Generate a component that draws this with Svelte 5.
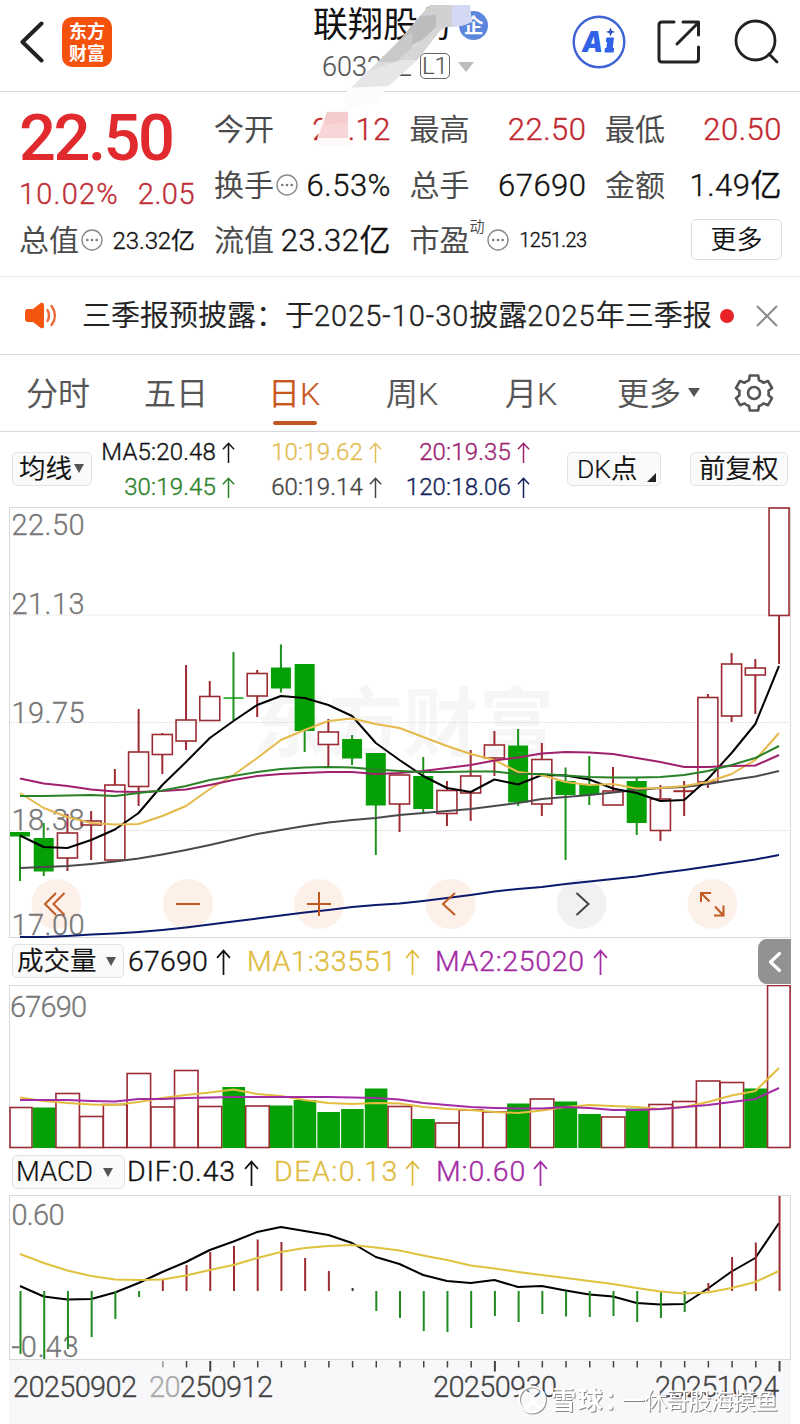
<script>
  const X0 = 20, STEP = 23.72;
  const cx = (i) => X0 + STEP * i;
  const line = (ys) => ys.map((y, i) => `${cx(i).toFixed(1)},${y}`).join(' ');

  // [up, bodyTop, bodyBottom, wickTop, wickBottom]
  const candles = [
    [0,832,836.5,832,881],[0,838,871.5,823,876],[1,833,858,814,871],[1,821,825,811,860],[1,785,860,769,860],
    [1,752,786.5,709,806],[1,734.5,754.5,733,774],[1,720,741,665,750],[1,696.5,720.5,681,721],[0,697.3,698.8,652,720],
    [1,673.5,696,670,717],[0,667.5,688.5,644.5,692.5],[0,664,731,664,752],[1,732,744.5,719,766],[0,739,758.5,735,765],
    [0,753,805.5,753,855],[1,775,804,775,832],[0,776,809,757,812],[1,790.5,813.5,781,826],[1,776,793,750,821],
    [1,745,758,731,776],[0,745.5,802.5,729,806],[1,759.5,804,743,816],[0,781,795,767.5,860],[0,784,795,756,805],
    [1,791,805,767,805],[0,781,823,777,835],[1,799,830.5,785,841],[1,791,791.4,781,816],[1,697.5,782,694,788],
    [1,664,716,653,722],[1,668,675,659,714],[1,508,615.5,508,664]
  ];
  const averages = [
    ['#4a4a4c', [868,867,866,864,861.5,858.5,854.5,850,845,839.5,834,830,826,822.5,820,818,815,813,811,809,806,803,799,797,795,792.5,790,788,787,784,780,776.5,771]],
    ['#0b1a6c', [937,937,936,934.5,933.5,932,930,927.5,924.5,921.5,918.5,915.5,912.5,910,907,905,903.5,901,898,895,891.5,889,887,884,881.5,879,876.5,873,870,866.5,863,859.5,855]],
    ['#000', [835.5,847,848,840,829.5,813,785,762,738,721,705,696,698,705,716,743,760,776,788,792,779.5,784.5,775,775.5,779.5,788.5,793,801,800,779,753,724,666]],
    ['#e6b94c', [793,808,817,823,824.5,824,816,806,789,775,758,740,730,721,718.5,724,728,737,746,754,760,772,775,782,785,784,788.5,788,786,782,774,760,733]],
    ['#a0206e', [778.5,783.5,786,789.5,791.5,792,791,789.5,785,780,776,774,773,772,772,774,773,771,768,765,760.5,757.5,753.5,752,752.5,754,758,762,767,767,766,765.5,755]],
    ['#2a8228', [796,796,795.5,795,796,793,790.5,786,780,776,772,769,767.5,767,767.5,769.5,771,772,772,771.5,771.5,774,774,775.5,777,777.5,777.5,777,775,771,765,758,746]]
  ];
  const volumes = [
    [1,1107.5],[0,1107.5],[1,1093.5],[1,1116.5],[1,1104.5],[1,1073.5],[1,1107],[1,1070.5],[1,1106.5],[0,1087],[1,1106],
    [0,1105.5],[0,1100],[0,1112],[0,1109],[0,1088.5],[1,1106.5],[0,1119],[1,1123],[1,1110],[1,1112],[0,1103.5],[1,1099],
    [0,1101.5],[0,1114],[1,1117],[0,1108.5],[1,1104.5],[1,1101.5],[1,1081],[1,1082.5],[0,1088.5],[1,985.5]
  ];
  const volYellow = [1097.5,1101,1103,1104.5,1105,1102,1098,1095,1092.5,1089.5,1094,1096,1100,1103,1104,1103,1103.5,1107,1109,1110,1112,1113,1110.5,1107,1105,1106,1107,1109,1107,1102,1095.5,1091,1068];
  const volPurple = [1100,1100,1100,1101,1101.5,1099,1099,1098,1097.5,1097,1097,1097,1097,1097,1097.5,1098,1099.5,1103,1105,1107,1108,1108.5,1108.5,1107,1108,1110,1110,1109,1107,1105,1102,1099,1088];
  const macd = [1354,1359,1349,1337,1319,1297,1279,1265,1252,1246,1239.5,1242,1258,1271,1288,1311,1318,1331,1332,1328,1316,1322,1314,1316.5,1317,1316,1322,1318,1312,1283,1257,1242.5,1196];
  const dif = [1286,1296.5,1299.5,1299,1292.5,1283,1272,1262,1250,1241.5,1232,1227,1231,1235,1243,1257,1264,1275,1281,1283,1280,1287,1286,1290.5,1294.5,1296.5,1303,1304.5,1304,1288.5,1271.5,1258,1223];
  const dea = [1254,1263,1270.5,1276,1279.5,1280,1279.5,1275.5,1270,1265,1258,1252,1248,1246,1245,1247.5,1250.5,1255.5,1260,1265.5,1268.5,1272,1275,1278,1281,1284,1288,1291.5,1293.5,1292.5,1288,1282,1271];
  const ticks = Array.from({ length: 27 }, (_, k) => k + 6);

  const priceLabels = [['22.50', 535], ['21.13', 614], ['19.75', 722.5], ['18.38', 830], ['17.00', 935]];
  const tools = [56.5, 188, 319, 450.5, 581.5, 712.5];
  const RED = '#9c2b34', GREEN = '#05a005';
</script>

{#snippet up(w, h)}
  <svg class="up" width={w} height={h} viewBox="0 0 14 24" preserveAspectRatio="none"><path d="M7 24V1.5M1 8.2L7 1.5L13 8.2" fill="none" stroke="currentColor" stroke-width="1.6" /></svg>
{/snippet}

{#snippet dots()}
  <svg class="dots" width="22" height="22" viewBox="0 0 22 22"><circle cx="11" cy="11" r="10" fill="none" stroke="#8a8a8a" stroke-width="1.4" /><g fill="#777"><circle cx="6.3" cy="11" r="1.3" /><circle cx="11" cy="11" r="1.3" /><circle cx="15.7" cy="11" r="1.3" /></g></svg>
{/snippet}

<main>
  <header>
    <svg class="back" width="24" height="42" viewBox="0 0 24 42"><path d="M21.5 2.5L2.5 21L21.5 39.5" fill="none" stroke="#222" stroke-width="4" stroke-linecap="round" stroke-linejoin="round" /></svg>
    <div class="logo"><span>东方</span><span>财富</span></div>
    <div class="title">
      <div class="name">联翔股份<span class="qi">企</span></div>
      <div class="code"><span>603272</span><span class="l1">L1</span><i></i></div>
      <svg class="mask" width="185" height="120" viewBox="310 0 185 120">
        <polygon points="430,5 470,5 472,22 448,26 440,30 417,60 386,88 351,88 398,42 420,16" fill="#dcdcde" />
        <polygon points="430,5 452,5 452,27 420,27 420,16" fill="#d0d0d2" />
        <polygon points="452,5 469,5 472,22 462,26 452,27" fill="#d3d8f3" />
        <polygon points="420,16 436,15 436,33 412,45 398,45 398,42" fill="#bcbcbe" />
        <polygon points="398,42 412,32 412,52 396,62 378,62" fill="#c9c9cb" />
        <polygon points="436,27 448,26 440,31 417,60 400,66 400,58 420,42" fill="#d6d6d8" />
        <polygon points="367,72 400,60 417,60 404,72 386,88 351,88" fill="#e6e6e8" />
        <polygon points="347,88 388,86 378,102 344,110" fill="#fcfcfc" />
      </svg>
    </div>
    <svg class="ai" width="54" height="54" viewBox="0 0 54 54">
      <circle cx="27" cy="27" r="25.3" fill="#fff" stroke="#3d63d6" stroke-width="2.4" />
      <text x="10" y="37" font-family="Inter" font-size="29" font-weight="900" font-style="italic" fill="#2f62e6" textLength="21" lengthAdjust="spacingAndGlyphs">A</text>
      <path d="M34.5 22.500h7.500l-1.200 10.500h1.400l-.6 4.500H32.500l.5-4.500h1.400l.7-6h-1.400z" fill="#2f62e6" />
      <path d="M38.500 12.500l1.300 3.200l3.300 1.200l-3.300 1.200l-1.300 3.300l-1.300-3.300l-3.300-1.200l3.300-1.200z" fill="#2b4fc0" />
    </svg>
    <svg class="share" width="46" height="46" viewBox="0 0 46 46" fill="none" stroke="#222" stroke-width="3" stroke-linecap="round" stroke-linejoin="round"><path d="M18 3H6Q3 3 3 6V40Q3 43 6 43H39Q42.500 43 42.500 40V28M27 3H42.500V16M42 4L21 25" /></svg>
    <svg class="search" width="46" height="46" viewBox="0 0 46 46" fill="none" stroke="#222" stroke-width="2.800" stroke-linecap="round"><circle cx="21.500" cy="21.500" r="19.500" /><path d="M35 35L43 43" /></svg>
  </header>

  <section class="quote">
    <div class="first">
      <div class="price">22.50</div>
      <div class="chg"><span>10.02%</span><span>2.05</span></div>
      <div class="cap"><label>总值</label>{@render dots()}<b>23.32亿</b></div>
    </div>
    <div class="cells">
      <div class="cell"><label>今开</label><b class="red">20.12</b>
        <svg class="pink" width="36" height="38" viewBox="0 0 36 38"><polygon points="10,0 34,0 34,37 1,37 4,22" fill="#fefafa" /><polygon points="12,3 33,3 33,29 3,29" fill="#f8d5d6" /><polygon points="12,3 33,3 33,13 9,16" fill="#f5cccd" /></svg>
      </div>
      <div class="cell"><label>最高</label><b class="red">22.50</b></div>
      <div class="cell"><label>最低</label><b class="red">20.50</b></div>
      <div class="cell"><label>换手</label>{@render dots()}<b>6.53%</b></div>
      <div class="cell"><label>总手</label><b>67690</b></div>
      <div class="cell"><label>金额</label><b>1.49亿</b></div>
      <div class="cell"><label>流值</label><b>23.32亿</b></div>
      <div class="cell"><label>市盈</label><sup>动</sup>{@render dots()}<b class="small">1251.23</b></div>
      <div class="cell"><button>更多</button></div>
    </div>
  </section>

  <section class="notice">
    <svg width="36" height="28" viewBox="0 0 36 28"><path d="M4 7H9L17 .8Q20 0 20 3V24Q20 27 17 26.200L9 20H4Q1 20 1 17V10Q1 7 4 7Z" fill="#f4550f" /><path d="M23.500 8Q26.500 13.500 23.500 19M27.500 4Q34.500 13.500 27.500 23" fill="none" stroke="#ee6a35" stroke-width="2.400" stroke-linecap="round" /></svg>
    <p>三季报预披露：于<span>2025-10-30</span>披露<span>2025</span>年三季报</p>
    <i></i>
    <svg width="24" height="24" viewBox="0 0 24 24"><path d="M2 2L22 22M22 2L2 22" stroke="#8c8c8c" stroke-width="2" /></svg>
  </section>

  <nav>
    <span>分时</span><span>五日</span><span class="on">日K</span><span>周K</span><span>月K</span><span class="more">更多<i></i></span>
    <svg width="40" height="40" viewBox="0 0 40 40" fill="none" stroke="#555" stroke-width="2.600" stroke-linejoin="round"><path d="M15.800 2.500H24.200L25 7.200Q27.500 8 29.500 9.800L34 8L38 15L34.400 18Q35 20 34.400 22L38 25.200L34 32.200L29.500 30.400Q27.500 32.200 25 33L24.200 37.500H15.800L15 33Q12.500 32.200 10.500 30.400L6 32.200L2 25.200L5.600 22Q5 20 5.600 18L2 15L6 8L10.500 9.800Q12.500 8 15 7.200Z" /><circle cx="20" cy="20" r="6" /></svg>
  </nav>

  <section class="ma">
    <span class="pill avg">均线<i></i></span>
    <div class="vals">
      <span>MA5:20.48{@render up(13, 21)}</span>
      <span style:color="#e3bd55">10:19.62{@render up(13, 21)}</span>
      <span style:color="#9c1f70">20:19.35{@render up(13, 21)}</span>
      <span style:color="#2a8228">30:19.45{@render up(13, 21)}</span>
      <span style:color="#444">60:19.14{@render up(13, 21)}</span>
      <span style:color="#141f5c">120:18.06{@render up(13, 21)}</span>
    </div>
    <span class="pill dk">DK点<svg width="9" height="9"><path d="M9 0V9H0Z" fill="#222" /></svg></span>
    <span class="pill fq">前复权</span>
  </section>

  <svg class="chart" width="800" height="431" viewBox="0 507 800 431">
    <text x="252" y="750" class="wm" textLength="302">东方财富</text>
    <path d="M9.500 938V507.500H790.500V938M9 937.500H791" fill="none" stroke="#d9d9d9" />
    <path d="M10 615H790M10 722.500H790M10 830.500H790" stroke="#e2e2e2" stroke-dasharray="2 1" />
    {#each tools as x, i}
      <circle cx={x} cy="904" r="25" fill={i === 4 ? '#f1f1f3' : '#fdf0e9'} />
    {/each}
    {#each priceLabels as [t, y]}
      <text x="11.500" {y} class="axis" textLength="73">{t}</text>
    {/each}
    {#each candles as [rise, t, b, hi, lo], i}
      {#if rise}
        <path d="M{cx(i)} {hi}V{t}M{cx(i)} {b}V{lo}" stroke={RED} stroke-width="2" />
        <rect x={cx(i) - 10} y={t} width="20" height={b - t} fill="none" stroke={RED} stroke-width="1.600" />
      {:else}
        <path d="M{cx(i)} {hi}V{lo}" stroke="#1c911c" stroke-width="2" />
        <rect x={cx(i) - 10} y={t} width="20" height={b - t} fill={GREEN} />
      {/if}
    {/each}
    {#each averages as [c, ys]}
      <polyline points={line(ys)} fill="none" stroke={c} stroke-width="2" stroke-linejoin="round" />
    {/each}
    <g fill="none" stroke="#c05a20" stroke-width="2">
      <path d="M56 893L45 904L56 915M64.500 893L53.500 904L64.500 915" />
      <path d="M176 904H200M307 904H331M319 892V916" />
      <path d="M455 893L443 904L455 915" />
      <path d="M576.500 893L588.500 904L576.500 915" stroke="#444" />
      <path d="M701 902V893H711M701.500 893.500L709.500 901.500M723.500 905.500V915.500H714M723 915L715 906.500" />
    </g>
  </svg>

  <section class="ind">
    <span class="pill vol">成交量<i></i></span>
    <span class="a">67690{@render up(15, 26)}</span>
    <span class="b">MA1:33551{@render up(15, 26)}</span>
    <span class="c">MA2:25020{@render up(15, 26)}</span>
    <span class="drawer"><svg width="14" height="22" viewBox="0 0 14 22"><path d="M11.500 2.500L2.500 11L11.500 19.500" fill="none" stroke="#fff" stroke-width="3.200" stroke-linecap="round" stroke-linejoin="round" /></svg></span>
  </section>

  <svg class="chart" width="800" height="164" viewBox="0 985 800 164">
    <path d="M9.500 1148V985.500H790.500V1148" fill="none" stroke="#d9d9d9" />
    <text x="10" y="1016.500" class="axis" textLength="77">67690</text>
    {#each volumes as [rise, t], i}
      {#if rise}
        <rect x={cx(i) - (i ? 11.5 : 10)} y={t} width={i === 32 ? 22.5 : i ? 23.5 : 22} height={1147.5 - t} fill="none" stroke={RED} stroke-width="1.600" />
      {:else}
        <rect x={cx(i) - 11} y={t} width="22.6" height={1148 - t} fill={GREEN} />
      {/if}
    {/each}
    <polyline points={line(volYellow)} fill="none" stroke="#e3bd3e" stroke-width="2" />
    <polyline points={line(volPurple)} fill="none" stroke="#a32ba5" stroke-width="2" />
  </svg>

  <section class="ind low">
    <span class="pill mac">MACD<i></i></span>
    <span class="a d">DIF:0.43{@render up(15, 26)}</span>
    <span class="b e">DEA:0.13{@render up(15, 26)}</span>
    <span class="c m">M:0.60{@render up(15, 26)}</span>
  </section>

  <svg class="chart" width="800" height="229" viewBox="0 1195 800 229">
    <rect x="9" y="1360" width="782" height="64" fill="#f8f8fa" />
    <rect x="9.500" y="1195.500" width="781" height="164" fill="none" stroke="#d9d9d9" />
    <text x="11.500" y="1225" class="axis" textLength="53">0.60</text>
    <text x="11.500" y="1356.500" class="axis" textLength="67">-0.43</text>
    <polyline points={line(dif)} fill="none" stroke="#000" stroke-width="2" stroke-linejoin="round" />
    {#each macd as y, i}
      <path d="M{cx(i) + 0.5} 1291V{y}" stroke={i === 14 ? '#333' : y < 1291 ? '#9c2b34' : '#1f8a1f'} stroke-width="2" />
    {/each}
    <polyline points={line(dea)} fill="none" stroke="#dfc23e" stroke-width="2" />
    {#each ticks as i}
      <path d="M{cx(i) + 0.5} 1361V{i % 12 === 8 ? 1371.5 : 1367.5}" stroke={i === 6 ? '#999' : '#444'} stroke-width={i % 12 === 8 ? 2 : 1.5} />
    {/each}
    <g class="date">
      <text x="13" y="1396.500" textLength="124">20250902</text>
      <text x="149" y="1396.500" textLength="124"><tspan class="faded">20</tspan>250912</text>
      <text x="433" y="1396.500" textLength="124">20250930</text>
      <text x="655" y="1396.500" textLength="124">20251024</text>
    </g>
    <g class="brand">
      <g fill="none" stroke-width="2"><g stroke="#999"><circle cx="533" cy="1400.500" r="13" /></g><g stroke="#fff"><circle cx="532" cy="1399.500" r="13" /><path d="M525 1392Q531 1394 533 1400T540 1408M539 1391Q531 1396 531 1401T525 1408" stroke-width="2.500" /></g></g>
      <text x="551" y="1409" class="name1" textLength="78">雪球：</text>
      <text x="622" y="1409" textLength="156">一休哥股海摸鱼</text>
    </g>
  </svg>
</main>

<style>
  :global(body) { margin: 0; background: #fff; }
  main { width: 800px; height: 1424px; overflow: hidden; background: #fff; color: #111; font-family: Roboto, 'Noto Sans CJK SC', sans-serif; font-weight: 350; white-space: nowrap; }
  header, section, nav { box-sizing: border-box; display: flex; }
  svg { display: block; flex: none; }
  b { font-weight: inherit; }
  b, .chg, .notice p span, .vals, .ind { -webkit-text-stroke: .35px currentColor; }
  label, .notice p, nav, .pill, .code { -webkit-text-stroke: .2px currentColor; }

  header { height: 92px; border-bottom: 1px solid #d6d6d6; position: relative; }
  .back { margin: 21px 0 0 20px; }
  .logo { margin: 17px 0 0 18px; width: 50px; height: 50px; box-sizing: border-box; padding-top: 2px; border-radius: 10px; background: #f4510d; color: #fff; display: flex; flex-direction: column; align-items: center; font: 700 18px/22px 'Noto Sans CJK SC', sans-serif; }
  .title { position: relative; width: 200px; margin-left: 201px; }
  .name { display: flex; height: 50px; font-size: 35px; line-height: 51px; font-weight: 400; }
  .qi { width: 29px; height: 29px; margin: 11px 0 0 6px; border-radius: 50%; background: #5c86dc; color: #fff; font: 700 20px/28px 'Noto Sans CJK SC', sans-serif; text-align: center; }
  .code { display: flex; height: 34px; padding-left: 9px; font-size: 27px; line-height: 35px; color: #555; }
  .l1 { width: 28px; height: 24px; margin: 3px 0 0 8px; border: 1.300px solid #666; border-radius: 5px; font-size: 24px; line-height: 25px; text-align: center; }
  .code i { margin: 12px 0 0 8px; border: 8px solid transparent; border-top: 10px solid #bcbcbc; border-bottom: 0; height: 0; }
  .mask { position: absolute; left: -3px; top: 0; }
  .ai { margin: 15px 0 0 59px; }
  .share { margin: 19px 0 0 30px; }
  .search { margin: 19px 0 0 32px; }

  .quote { height: 185px; border-bottom: 1px solid #e6e6e6; }
  .first { width: 176px; margin-left: 19px; }
  .price { margin-top: 14px; height: 64px; font-size: 65px; line-height: 65px; font-weight: 480; letter-spacing: -2.500px; color: #e02a2e; }
  .chg { display: flex; justify-content: space-between; height: 46px; font-size: 29px; line-height: 48px; color: #bf2e35; letter-spacing: 1.200px; }
  .chg span + span { letter-spacing: .5px; }
  .cap { display: flex; height: 50px; line-height: 50px; }
  label { font-size: 30px; color: #4a4a4a; }
  .dots { margin: 13px 0 0 2px; }
  .cap b { margin-left: auto; font-size: 24px; letter-spacing: -.1px; }
  .cells { display: grid; grid-template-columns: 177px 177px 177px; grid-auto-rows: 55.500px; column-gap: 18.500px; margin: 10px 0 0 19px; }
  .cell { position: relative; display: flex; line-height: 55.500px; }
  .cell .dots { margin-top: 16px; }
  .cell b { margin-left: auto; font-size: 31px; letter-spacing: .5px; }
  .cell .small { font-size: 20px; letter-spacing: -.6px; }
  .red { color: #c1282f; }
  sup { font-size: 15px; line-height: 28px; vertical-align: top; color: #4a4a4a; }
  .pink { position: absolute; left: 101px; top: 7px; }
  button { box-sizing: border-box; width: 92px; height: 41px; margin: 6px 0 0 86px; padding: 0; border: 1.500px solid #dedede; border-radius: 5px; background: #fff; color: #111; font: inherit; font-size: 26px; line-height: 36px; }

  .notice { height: 78px; border-bottom: 1px solid #d9d9d9; align-items: center; }
  .notice > svg:first-child { margin-left: 24px; }
  .notice p { margin: 0 0 0 22px; width: 638px; font-size: 29px; line-height: 40px; color: #222; }
  .notice p span { letter-spacing: 1px; }
  .notice i { width: 14px; height: 14px; border-radius: 50%; background: #e82226; }
  .notice > svg:last-child { margin-left: 21px; }

  nav { height: 77px; border-bottom: 1px solid #d9d9d9; padding-left: 26px; color: #555; font-size: 32px; line-height: 79px; }
  nav span { width: 118px; height: 76px; }
  nav span:nth-child(4) { width: 119px; }
  nav span:nth-child(2) { width: 124px; }
  nav span:nth-child(5) { width: 112px; }
  .on { color: #c8561e; position: relative; }
  .on::after { content: ''; position: absolute; left: 5px; bottom: 6px; width: 44px; height: 4.500px; border-radius: 2px; background: #c25522; }
  nav .more { display: flex; }
  .more i { margin: 33px 0 0 7px; height: 0; border: 6px solid transparent; border-top: 9px solid #555; border-bottom: 0; }
  nav svg { margin: 18px 0 0 -1px; }

  .pill { box-sizing: border-box; display: flex; height: 34px; border: 1.500px solid #e3e3e3; border-radius: 5px; background: #fafafa; color: #111; font-size: 26.500px; line-height: 31px; }
  .pill i { height: 0; border: 5.500px solid transparent; border-top: 9px solid #555; border-bottom: 0; }
  .ma { height: 75px; }
  .avg { width: 80px; margin: 20px 0 0 12px; padding-left: 6px; }
  .avg i { margin: 11px 0 0 2px; }
  .vals { display: grid; grid-template-columns: 143px 147px 148px; grid-auto-rows: 35px; margin-top: 2.500px; justify-items: end; font-size: 24px; line-height: 35px; letter-spacing: .15px; }
  .vals span, .ind > span { display: flex; }
  .vals .up { margin: 7px 0 0 6px; }
  .dk { width: 94px; margin: 20px 0 0 37px; padding-left: 9px; position: relative; }
  .dk svg { position: absolute; right: 4px; bottom: 3px; }
  .fq { width: 98px; margin: 20px 0 0 29px; padding-left: 8px; }

  .wm { font: 700 75px 'Noto Sans CJK SC', sans-serif; fill: #f6f6f6; }
  .axis { font-size: 29px; fill: #777; stroke: #777; stroke-width: .3px; }
  .date { font-size: 29px; fill: #444; stroke: #444; stroke-width: .3px; }
  .faded { fill: #aaa; stroke: #aaa; }

  .ind { height: 47px; font-size: 28.500px; line-height: 47px; }
  .ind .up { margin: 11px 0 0 8px; }
  .ind .pill { margin: 6px 0 0 12px; letter-spacing: 0; }
  .vol { width: 112px; padding-left: 4px; }
  .vol i { margin: 12px 0 0 9px; }
  .a { width: 119px; margin-left: 4px; letter-spacing: .2px; }
  .b { width: 188px; color: #dfbc3e; letter-spacing: .7px; }
  .c { width: 175px; color: #a32ba5; letter-spacing: .7px; }
  .ind .drawer { width: 33px; height: 45px; margin: 1px 0 0 148px; border-radius: 9px 0 0 9px; background: #929292; align-items: center; justify-content: center; }
  .low { height: 46px; line-height: 46px; }
  .low .pill { margin-top: 6px; }
  .mac { width: 113px; padding-left: 3px; font-size: 27.500px; }
  .mac i { margin: 12px 0 0 10px; }
  .ind .d { width: 147px; margin-left: 2px; letter-spacing: .8px; }
  .ind .e { width: 162px; letter-spacing: 1.500px; }
  .ind .m { letter-spacing: .9px; }
  .ind .e .up { margin-left: 6px; }
  .ind .m .up { margin-left: 7px; }
  .brand text { font: 400 23px 'Noto Sans CJK SC', sans-serif; fill: #fff; filter: drop-shadow(1px 1px .5px #888); }
  .brand .name1 { font-size: 25px; font-weight: 700; }
</style>
